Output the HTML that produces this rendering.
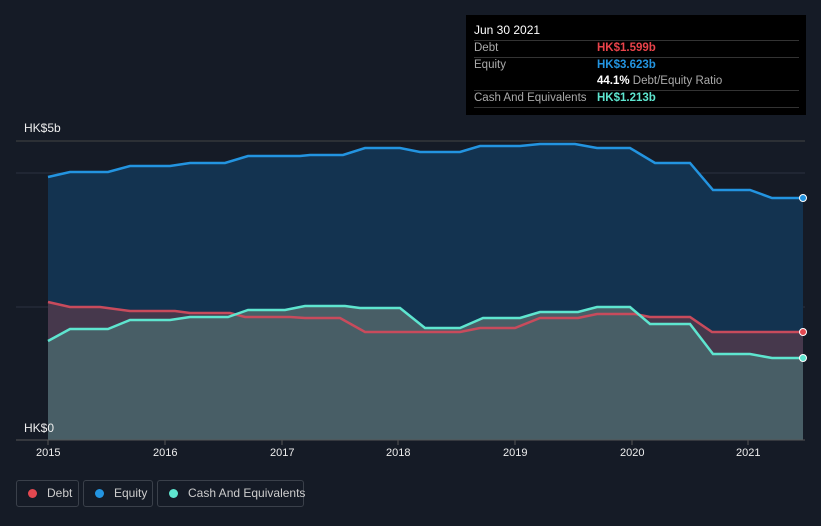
<!DOCTYPE html><html><head><style>
html,body{margin:0;width:821px;height:526px;overflow:hidden}
body{background:#151b26;font-family:"Liberation Sans",sans-serif;position:relative}
.t{position:absolute;background:#000;left:466px;top:15px;width:340px;height:100px;color:#aaa;font-size:11.5px}
.r{position:absolute;left:8px;width:325px;border-top:1px solid #333}
.leg{position:absolute;top:480px;height:27px;border:1px solid #3a404a;border-radius:3px;color:#ccc;font-size:12px;line-height:25px;box-sizing:border-box;white-space:nowrap}
.leg i{display:inline-block;width:9px;height:9px;border-radius:50%;margin:0 10px 0 11px;vertical-align:-1px}
.ax{position:absolute;color:#eee;font-size:11px}
</style></head><body>
<svg width="821" height="526" style="position:absolute;left:0;top:0">
<line x1="16" y1="141" x2="805" y2="141" stroke="#444" />
<line x1="16" y1="173" x2="805" y2="173" stroke="#2a3140"/>
<line x1="16" y1="307" x2="805" y2="307" stroke="#2a3140"/>
<path d="M48,177L70,172L108,172L130,166L170,166L190,163L225,163L248,156L300,156L310,155L343,155L365,148L400,148L420,152L460,152L480,146L520,146L540,144L575,144L597,148L630,148L655,163L690,163L713,190L750,190L772,198L803,198L803,440L48,440Z" fill="#133350"/>
<path d="M48,302L70,307L100,307L130,311L175,311L190,313L230,313L245,317L290,317L305,318L340,318L365,332L460,332L480,328L515,328L540,318L578,318L597,314L635,314L650,317L690,317L712,332L803,332L803,440L48,440Z" fill="#46384c"/>
<path d="M48,341L70,329L108,329L130,320L170,320L190,317L228,317L248,310L285,310L305,306L345,306L360,308L400,308L425,328L460,328L483,318L520,318L540,312L578,312L597,307L630,307L650,324L690,324L713,354L750,354L772,358L803,358L803,440L48,440Z" fill="#485e66"/>
<path d="M48,177L70,172L108,172L130,166L170,166L190,163L225,163L248,156L300,156L310,155L343,155L365,148L400,148L420,152L460,152L480,146L520,146L540,144L575,144L597,148L630,148L655,163L690,163L713,190L750,190L772,198L803,198" fill="none" stroke="#2394e0" stroke-width="2.5"/>
<path d="M48,302L70,307L100,307L130,311L175,311L190,313L230,313L245,317L290,317L305,318L340,318L365,332L460,332L480,328L515,328L540,318L578,318L597,314L635,314L650,317L690,317L712,332L803,332" fill="none" stroke="#c84b5c" stroke-width="2.5"/>
<path d="M48,341L70,329L108,329L130,320L170,320L190,317L228,317L248,310L285,310L305,306L345,306L360,308L400,308L425,328L460,328L483,318L520,318L540,312L578,312L597,307L630,307L650,324L690,324L713,354L750,354L772,358L803,358" fill="none" stroke="#5ee5cf" stroke-width="2.5"/>
<circle cx="803" cy="198" r="3.5" fill="#2394e0" stroke="#fff"/>
<circle cx="803" cy="332" r="3.5" fill="#e34850" stroke="#fff"/>
<circle cx="803" cy="358" r="3.5" fill="#5ee5cf" stroke="#fff"/>
<line x1="16" y1="440" x2="805" y2="440" stroke="#555"/>
<g stroke="#555"><line x1="48" y1="440" x2="48" y2="445"/><line x1="165" y1="440" x2="165" y2="445"/><line x1="282" y1="440" x2="282" y2="445"/><line x1="398" y1="440" x2="398" y2="445"/><line x1="515" y1="440" x2="515" y2="445"/><line x1="632" y1="440" x2="632" y2="445"/><line x1="748" y1="440" x2="748" y2="445"/></g>
</svg>
<div class="ax" style="left:24px;top:121px;font-size:12px">HK$5b</div>
<div class="ax" style="left:24px;top:421px;font-size:12px">HK$0</div>
<div class="ax" style="left:36px;top:447px">2015</div><div class="ax" style="left:153px;top:447px">2016</div><div class="ax" style="left:270px;top:447px">2017</div><div class="ax" style="left:386px;top:447px">2018</div><div class="ax" style="left:503px;top:447px">2019</div><div class="ax" style="left:620px;top:447px">2020</div><div class="ax" style="left:736px;top:447px">2021</div>
<div class="t">
<div style="position:absolute;left:8px;top:8px;color:#fff;font-size:12px">Jun 30 2021</div>
<div class="r" style="top:25px"></div>
<div style="position:absolute;left:8px;top:27px">Debt</div><div style="position:absolute;left:131px;top:27px;color:#e9434a;font-weight:bold">HK$1.599b</div>
<div class="r" style="top:42px"></div>
<div style="position:absolute;left:8px;top:44px">Equity</div><div style="position:absolute;left:131px;top:44px;color:#2394e0;font-weight:bold">HK$3.623b</div>
<div style="position:absolute;left:131px;top:60px"><b style="color:#fff">44.1%</b> Debt/Equity Ratio</div>
<div class="r" style="top:75px"></div>
<div style="position:absolute;left:8px;top:77px">Cash And Equivalents</div><div style="position:absolute;left:131px;top:77px;color:#5ee5cf;font-weight:bold">HK$1.213b</div>
<div class="r" style="top:92px"></div>
</div>
<div class="leg" style="left:16px;width:63px"><i style="background:#e34850"></i>Debt</div>
<div class="leg" style="left:83px;width:70px"><i style="background:#2394e0"></i>Equity</div>
<div class="leg" style="left:157px;width:147px"><i style="background:#5ee5cf"></i>Cash And Equivalents</div>
</body></html>
